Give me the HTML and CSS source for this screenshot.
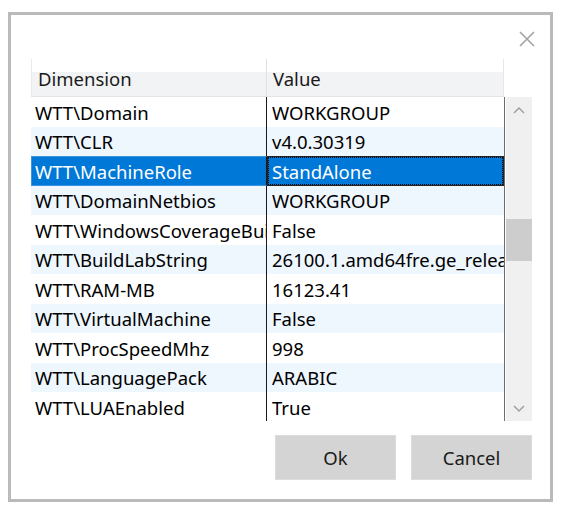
FILE: index.html
```html
<!DOCTYPE html>
<html>
<head>
<meta charset="utf-8">
<link rel="stylesheet" href="styles.css">
</head>
<body>
<div class="dialog">
  <div class="titlebar">
    <svg class="close" width="16" height="16" viewBox="0 0 16 16"><path d="M1 1 L15 15 M15 1 L1 15" stroke="#a3a3a3" stroke-width="1.6" fill="none"/></svg>
  </div>
  <div class="grid">
    <div class="header">
      <div class="hcell hcol1">Dimension</div>
      <div class="hcell hcol2">Value</div>
      <div class="hspacer"></div>
    </div>
    <div class="body">
      <div class="rows">
        <div class="row"><div class="c1">WTT\Domain</div><div class="c2">WORKGROUP</div></div>
        <div class="row alt"><div class="c1">WTT\CLR</div><div class="c2">v4.0.30319</div></div>
        <div class="row sel"><div class="c1">WTT\MachineRole</div><div class="c2">StandAlone</div></div>
        <div class="row alt"><div class="c1">WTT\DomainNetbios</div><div class="c2">WORKGROUP</div></div>
        <div class="row"><div class="c1">WTT\WindowsCoverageBuild</div><div class="c2">False</div></div>
        <div class="row alt"><div class="c1">WTT\BuildLabString</div><div class="c2">26100.1.amd64fre.ge_release</div></div>
        <div class="row"><div class="c1">WTT\RAM-MB</div><div class="c2">16123.41</div></div>
        <div class="row alt"><div class="c1">WTT\VirtualMachine</div><div class="c2">False</div></div>
        <div class="row"><div class="c1">WTT\ProcSpeedMhz</div><div class="c2">998</div></div>
        <div class="row alt"><div class="c1">WTT\LanguagePack</div><div class="c2">ARABIC</div></div>
        <div class="row"><div class="c1">WTT\LUAEnabled</div><div class="c2">True</div></div>
      </div>
      <div class="scrollbar">
        <div class="arrow"><svg width="12" height="8" viewBox="0 0 12 8"><path d="M1 7 L6 2 L11 7" stroke="#a0a0a0" stroke-width="1.5" fill="none"/></svg></div>
        <div class="track"><div class="thumb"></div></div>
        <div class="arrow"><svg width="12" height="8" viewBox="0 0 12 8"><path d="M1 1 L6 6 L11 1" stroke="#a0a0a0" stroke-width="1.5" fill="none"/></svg></div>
      </div>
    </div>
  </div>
  <div class="buttons">
    <div class="btn">Ok</div>
    <div class="btn">Cancel</div>
  </div>
</div>
</body>
</html>
```
FILE: styles.css
```css
html, body {
  margin: 0;
  padding: 0;
  background: #ffffff;
}
body {
  font-family: "Noto Sans", "Open Sans", sans-serif;
  font-size: 18.5px;
  color: #000;
}
.dialog {
  box-sizing: border-box;
  margin: 12px 0 0 8px;
  width: 545px;
  height: 490px;
  border: 3px solid #bababa;
  padding: 0 18px 0 20px;
  display: flex;
  flex-direction: column;
}
.titlebar {
  height: 44px;
  display: flex;
  justify-content: flex-end;
  align-items: flex-start;
  margin-right: -3px;
  box-sizing: border-box;
  padding-top: 16px;
}
.close {
  display: block;
}
.grid {
  display: flex;
  flex-direction: column;
}
.header {
  display: flex;
  height: 38px;
}
.hcell {
  box-sizing: border-box;
  height: 38px;
  background: linear-gradient(to bottom, #ffffff 0, #ffffff 34%, #f2f3f5 34%, #f2f3f5 100%);
  border-bottom: 1px solid #e3e4e6;
  display: flex;
  align-items: center;
  padding-left: 6px;
  padding-top: 2px;
  color: #1a1a1a;
}
.hcol1 {
  width: 236px;
  border-left: 1px solid #eaeaea;
  border-right: 1px solid #e2e2e2;
}
.hcol2 {
  width: 237px;
  border-right: 1px solid #e6e6e6;
  padding-left: 6px;
}
.hspacer {
  flex: 1;
}
.body {
  display: flex;
  height: 324px;
}
.rows {
  width: 473px;
  border-right: 1px solid #6d6d6d;
  overflow: hidden;
  display: flex;
  flex-direction: column;
}
.row {
  display: flex;
  height: 29.5px;
  flex: none;
  background: #ffffff;
}
.row.alt {
  background: #eef6fe;
}
.c1, .c2 {
  box-sizing: border-box;
  height: 100%;
  display: flex;
  align-items: center;
  white-space: nowrap;
  overflow: hidden;
  padding-top: 1px;
}
.c1 {
  width: 236px;
  padding-left: 4px;
  border-right: 1px solid #1a1a1a;
}
.c2 {
  width: 237px;
  padding-left: 5px;
}
.row.sel {
  background: #0078d7;
  color: #ffffff;
}
.row.sel .c1 {
  border: 1px solid #3d94dd;
  border-right: 1px solid #1a1a1a;
  padding-left: 3px;
}
.row.sel .c2 {
  border: 1px solid #222;
  outline: 1px dotted #000;
  outline-offset: -2px;
  padding-left: 4px;
}
.scrollbar {
  width: 26px;
  margin-left: 1px;
  background: #f0f0f0;
  display: flex;
  flex-direction: column;
}
.arrow {
  height: 25px;
  display: flex;
  align-items: center;
  justify-content: center;
}
.track {
  flex: 1;
  padding-top: 97px;
}
.thumb {
  height: 42px;
  background: #cdcdcd;
}
.buttons {
  display: flex;
  justify-content: flex-end;
  gap: 15px;
  margin-top: 14px;
}
.btn {
  box-sizing: border-box;
  width: 121px;
  height: 45px;
  background: #d4d4d4;
  border: 1px solid #dcdcdc;
  display: flex;
  align-items: center;
  justify-content: center;
  color: #1a1a1a;
}
```
